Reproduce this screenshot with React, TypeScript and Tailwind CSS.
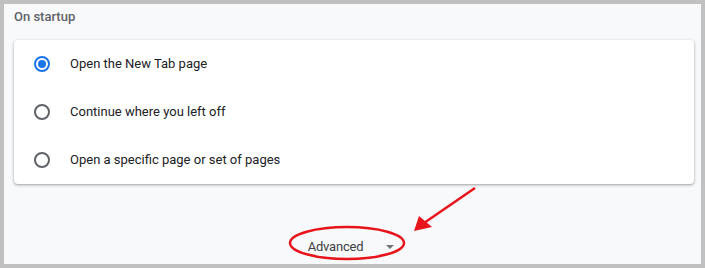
import React, { useState } from "react";

const options = [
	"Open the New Tab page",
	"Continue where you left off",
	"Open a specific page or set of pages",
];

function Radio({ checked }: { checked: boolean }) {
	return (
		<span
			className={
				"flex h-4 w-4 shrink-0 items-center justify-center rounded-full border-2 " +
				(checked ? "border-[#1a73e8]" : "border-[#5f6368]")
			}
		>
			{checked && <span className="h-2 w-2 rounded-full bg-[#1a73e8]" />}
		</span>
	);
}

export default function App() {
	const [selected, setSelected] = useState(0);

	return (
		<div
			className="relative h-[268px] w-[705px] border-4 border-[#c0c0c0] bg-[#f8f9fa]"
			style={{ fontFamily: "Roboto, 'Liberation Sans', sans-serif" }}
		>
			<div className="pl-[10px] pr-[7px] pt-[3px]">
				<h2 className="h-5 text-[13px] font-medium leading-5 text-[#5f6368]">On startup</h2>
				<div className="mt-[13px] rounded-[4px] bg-white shadow-[0_1px_2px_rgba(60,64,67,0.3),0_1px_3px_1px_rgba(60,64,67,0.15)]">
					{options.map((label, i) => (
						<div
							key={label}
							className="flex h-12 cursor-pointer items-center gap-5 px-5"
							onClick={() => setSelected(i)}
						>
							<Radio checked={selected === i} />
							<span className="text-[13px] text-[#202124]">{label}</span>
						</div>
					))}
				</div>
				<div className="mt-[53px] flex h-5 items-center justify-center gap-[23px] pr-[6px]">
					<span className="text-[13px] tracking-[-0.2px] text-[#3c4043]">Advanced</span>
					<span className="h-0 w-0 border-x-4 border-t-4 border-x-transparent border-t-[#757575]" />
				</div>
			</div>

			{/* annotation */}
			<svg className="pointer-events-none absolute left-0 top-0" width="697" height="260" viewBox="4 4 697 260">
				<ellipse cx="347" cy="243" rx="57" ry="16" fill="none" stroke="#e8141c" strokeWidth="2.5" />
				<line x1="475" y1="188" x2="424" y2="223" stroke="#e8141c" strokeWidth="2.5" />
				<polygon points="414,231 419,216 432,227" fill="#e8141c" />
			</svg>
		</div>
	);
}
